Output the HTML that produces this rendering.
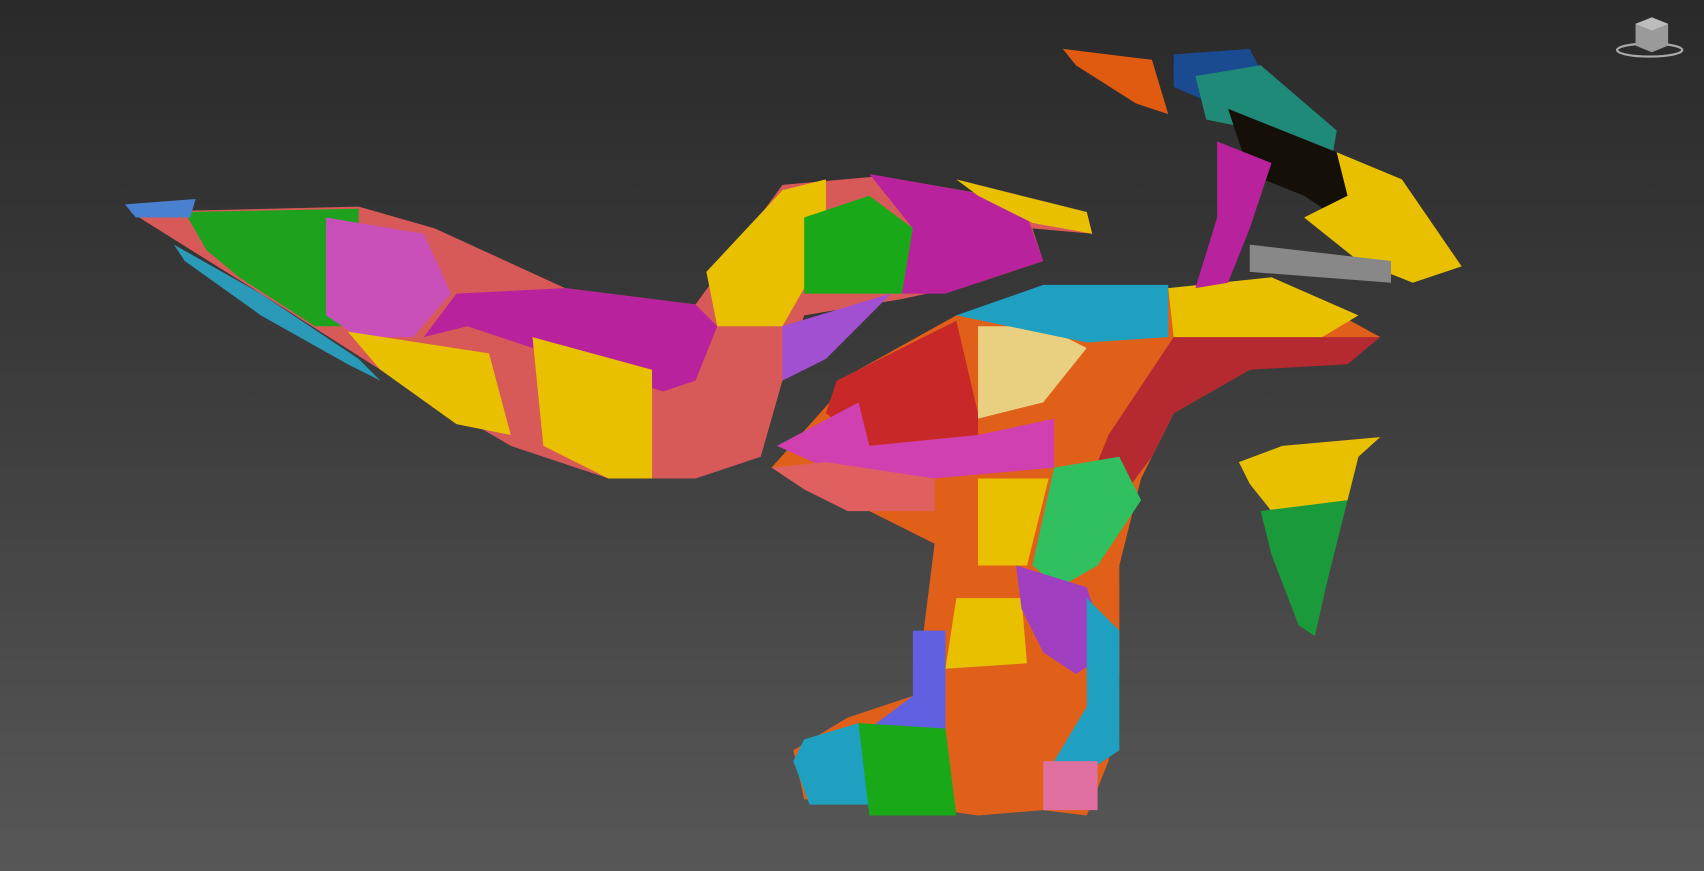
<!DOCTYPE html>
<html><head><meta charset="utf-8"><style>
html,body{margin:0;padding:0;width:1704px;height:871px;overflow:hidden;background:linear-gradient(#2a2a2a,#3a3a3a 40%,#575757);}
svg{position:absolute;left:0;top:0}
</style></head><body>
<svg width="1704" height="871" viewBox="0 0 1568 801" preserveAspectRatio="none">
<g stroke="none">
<!-- left tail piece -->
<polygon fill="#d85a58" points="120,195 330,190 400,210 520,265 640,280 720,170 810,162 1000,195 1005,215 950,210 960,240 900,260 830,275 740,290 720,350 700,420 640,440 560,440 470,410 350,340 240,270 160,220"/>
<polygon fill="#1ea21e" points="170,195 330,192 330,300 290,300 220,255 190,230"/>
<polygon fill="#c850b8" points="300,200 390,215 415,270 380,310 330,310 300,290"/>
<polygon fill="#b8229c" points="520,265 640,280 660,300 640,350 610,360 520,330 430,300 390,310 420,270"/>
<polygon fill="#e8c000" points="320,305 450,325 470,400 420,390 350,340"/>
<polygon fill="#e8c000" points="490,310 600,340 600,440 560,440 500,410"/>
<polygon fill="#e8c000" points="650,250 720,175 760,165 760,230 720,300 660,300"/>
<polygon fill="#18a818" points="740,200 800,180 840,210 830,270 740,270"/>
<polygon fill="#b8229c" points="800,160 940,185 960,240 870,270 830,270 840,210"/>
<polygon fill="#e8c000" points="880,165 1000,195 1005,215 950,205 900,180"/>
<polygon fill="#4a80d0" points="115,188 180,183 175,200 125,200"/>
<polygon fill="#2a9ab8" points="160,225 240,270 330,330 350,350 320,335 240,290 170,240"/>
<polygon fill="#a050d0" points="720,300 820,270 760,330 720,350"/>
<!-- main body -->
<polygon fill="#e0601a" points="710,430 790,340 880,290 960,270 1080,265 1170,255 1270,310 1240,330 1150,340 1080,380 1050,440 1030,520 1030,620 1020,700 1000,750 960,745 900,750 830,740 740,735 730,690 780,660 840,640 850,580 860,500 800,470 760,450"/>
<polygon fill="#c82828" points="770,350 880,295 900,380 900,400 800,410 760,380"/>
<polygon fill="#e8d080" points="900,300 960,300 1000,320 960,370 900,385"/>
<polygon fill="#d040b0" points="715,410 790,370 800,410 900,400 970,385 970,430 860,440 760,430"/>
<polygon fill="#20a0c0" points="880,290 960,262 1075,262 1075,310 1000,315"/>
<polygon fill="#e8c000" points="1075,265 1170,255 1250,290 1200,320 1080,310"/>
<polygon fill="#b52a30" points="1080,310 1270,310 1240,335 1150,340 1080,380 1060,420 1030,460 1000,450 1020,400"/>
<polygon fill="#e06060" points="710,430 760,425 860,440 860,470 780,470 740,450"/>
<polygon fill="#e8c000" points="900,440 965,440 945,520 900,520"/>
<polygon fill="#e8c000" points="880,550 940,550 945,610 870,615"/>
<polygon fill="#30c060" points="970,430 1030,420 1050,460 1010,520 975,540 950,520"/>
<polygon fill="#a040c0" points="935,520 1000,540 1020,600 990,620 960,600 940,560"/>
<polygon fill="#20a0c0" points="1000,550 1030,580 1030,690 985,720 970,700 1000,650"/>
<polygon fill="#e070a0" points="960,700 1010,700 1010,745 960,745"/>
<polygon fill="#6060e0" points="840,580 870,580 870,670 800,670 840,640"/>
<polygon fill="#20a0c0" points="740,680 790,665 800,740 745,740 730,700"/>
<polygon fill="#18a818" points="790,665 870,670 880,750 800,750"/>
<!-- windscreen -->
<polygon fill="#e05a10" points="978,45 1060,55 1075,105 1045,95 990,60"/>
<polygon fill="#1a4a90" points="1080,50 1150,45 1165,75 1115,95 1080,80"/>
<polygon fill="#208a78" points="1100,70 1160,60 1230,120 1225,150 1160,120 1110,110"/>
<polygon fill="#141008" points="1130,100 1230,140 1290,200 1260,220 1200,180 1150,160"/>
<polygon fill="#e8c000" points="1230,140 1290,165 1345,245 1300,260 1250,240 1200,200 1240,180"/>
<polygon fill="#b8229c" points="1120,130 1170,150 1150,210 1130,260 1100,265 1120,200"/>
<polygon fill="#888" points="1150,225 1280,240 1280,260 1150,250"/>
<!-- small fender -->
<polygon fill="#e8c000" points="1140,425 1180,410 1270,402 1250,420 1240,460 1170,470 1150,445"/>
<polygon fill="#1a9a3a" points="1160,470 1240,460 1220,540 1210,585 1195,575 1170,510"/>
<!-- viewcube -->
<ellipse cx="1518" cy="46" rx="30" ry="6" fill="none" stroke="#aaa" stroke-width="2"/>
<polygon fill="#9a9a9a" points="1505,22 1520,16 1535,22 1535,42 1520,48 1505,42"/>
<polygon fill="#bdbdbd" points="1505,22 1520,16 1535,22 1520,28"/>
</g>
</svg>
</body></html>
